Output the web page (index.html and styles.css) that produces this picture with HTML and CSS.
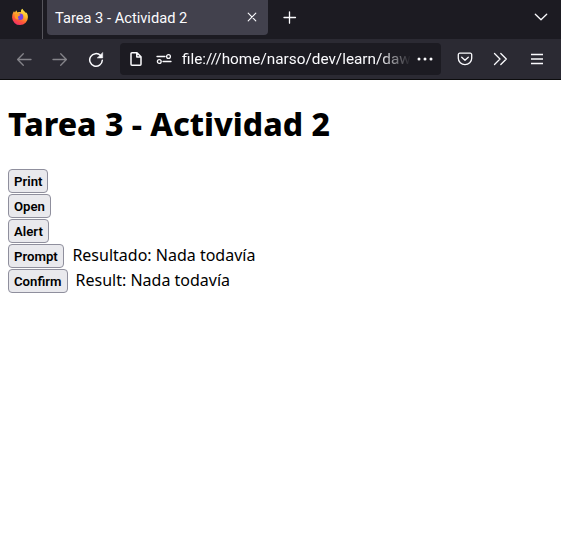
FILE: index.html
```html
<!DOCTYPE html>
<html lang="es">
<head>
<meta charset="utf-8">
<title>Tarea 3 - Actividad 2</title>
<link rel="stylesheet" href="styles.css">
</head>
<body>
<header class="tabs">
  <div class="pinned">
    <svg width="18" height="18" viewBox="0 0 18 18">
      <defs>
        <linearGradient id="flame" x1=".8" y1="0" x2=".3" y2="1"><stop offset="0" stop-color="#fff04a"/><stop offset=".4" stop-color="#ffb52a"/><stop offset=".7" stop-color="#ff5a36"/><stop offset="1" stop-color="#f02b6b"/></linearGradient>
      </defs>
      <path d="M1.300 7.200C1.600 5.500 2.200 4.300 3 3.300L4 4.600 5.200 2.200 6.500 4.600C8 3.900 9 4 10 4.200 9.600 2.500 10.400 1.200 11.500.7 12 2.700 14 3.200 15 5L15.500 4.400C16.600 6 17 7.600 16.900 9.300A7.900 7.700 0 0 1 1.100 9.500Z" fill="url(#flame)"/>
      <circle cx="9" cy="8.700" r="3.300" fill="#7542e5"/>
      <path d="M3.800 6.200C5.500 5.200 7.400 5.500 8.500 6.200L9.500 6.700C9 7.800 7.500 7.700 7.100 8.600 6.700 9.700 7.300 10.500 8 11 6 12.300 4.200 11 3.800 9Z" fill="#ff9a25"/>
    </svg>
  </div>
  <div class="tab"><span>Tarea 3 - Actividad 2</span>
    <svg class="close" width="10" height="10" viewBox="0 0 10 10"><path d="M1.200 1.200l7.600 7.600M8.800 1.200l-7.600 7.600"/></svg>
  </div>
  <svg class="plus" width="14" height="14" viewBox="0 0 14 14"><path d="M1 7.500h11.500M6.500 1.800v11.400"/></svg>
  <svg class="chevron" width="14" height="8" viewBox="0 0 14 8"><path d="M1.300 1.300L7 6.700l5.700-5.400"/></svg>
</header>
<nav class="toolbar">
  <svg class="back dim" width="16" height="16" viewBox="0 0 16 16"><path d="M15 8.500H2M7.300 2.800L1.600 8.500l5.700 5.700"/></svg>
  <svg class="forward dim" width="16" height="16" viewBox="0 0 16 16"><path d="M1 8.500h13M8.700 2.800l5.700 5.700-5.700 5.700"/></svg>
  <svg class="reload" width="16" height="16" viewBox="0 0 16 16"><path d="M12.600 4.600A6.300 6.300 0 1 0 14.300 9.200"/><path class="solid" d="M14.700 1.800v5.200H9.500z"/></svg>
  <div class="address">
    <svg class="page" width="14" height="16" viewBox="0 0 14 16"><path d="M3 1.700h5l4 4v7.600a1 1 0 0 1-1 1H3a1 1 0 0 1-1-1V2.700a1 1 0 0 1 1-1zM7.800 1.700v4.200H12"/></svg>
    <svg class="settings" width="16" height="12" viewBox="0 0 16 12"><path d="M1 3.500h8M7 8.500h8"/><circle cx="12.500" cy="3.500" r="1.900"/><circle cx="3.300" cy="8.500" r="1.900"/></svg>
    <div class="url">file:///home/narso/dev/learn/daw</div>
    <svg class="dots" width="16" height="4" viewBox="0 0 16 4"><circle cx="2" cy="2" r="1.500"/><circle cx="8" cy="2" r="1.500"/><circle cx="14" cy="2" r="1.500"/></svg>
  </div>
  <svg class="pocket" width="16" height="14" viewBox="0 0 16 14"><path d="M2.800 1.200h10.400a1.500 1.500 0 0 1 1.500 1.500v3.500a6.700 6.500 0 0 1-13.400 0V2.700a1.500 1.500 0 0 1 1.500-1.500zM4.700 5.200L8 8.300 11.300 5.200"/></svg>
  <svg class="more" width="15" height="14" viewBox="0 0 15 14"><path d="M1.500 1.500L7 7l-5.500 5.500M7.800 1.500L13.300 7l-5.500 5.500"/></svg>
  <svg class="menu" width="12" height="12" viewBox="0 0 12 12"><path d="M0 1.500h12M0 6h12M0 10.500h12"/></svg>
</nav>
<main>
  <h1>Tarea 3 - Actividad 2</h1>
  <div class="row"><button>Print</button></div>
  <div class="row"><button>Open</button></div>
  <div class="row"><button>Alert</button></div>
  <div class="row"><button>Prompt</button><span>Resultado: Nada todavía</span></div>
  <div class="row"><button>Confirm</button><span>Result: Nada todavía</span></div>
</main>
</body>
</html>
```
FILE: styles.css
```css
* { box-sizing: border-box; }
body { margin: 0; background: #fff; color: #000; font: 16px "Noto Sans", sans-serif; overflow: hidden; }
svg { display: block; flex: none; fill: none; stroke: #fbfbfe; stroke-width: 1.3; stroke-linecap: round; stroke-linejoin: round; }
.tabs { display: flex; height: 39px; background: #1c1b22; color: #fbfbfe; }
.pinned { width: 43px; border-right: 1px solid #56555c; padding: 8px 0 0 11px; }
.pinned svg { stroke: none; }
.tab { display: flex; align-items: center; justify-content: space-between; width: 221px; height: 35px; margin-left: 4px; padding: 0 11px 0 8px; border-radius: 0 0 4px 4px; background: #42414d; font: 14.67px Roboto, sans-serif; }
.close { stroke-width: 1.1; margin-top: -1px; }
.plus { margin: 10px 0 0 15px; }
.chevron { margin: 13px 13px 0 auto; }
.toolbar { display: flex; align-items: center; height: 41px; padding-bottom: 1px; background: #2b2a33; border-bottom: 1px solid #0c0c0d; }
.dim { stroke: #85848a; }
.back { margin-left: 16px; }
.forward { margin-left: 20px; }
.reload { margin-left: 20px; stroke-width: 1.5; margin-top: 1px; }
.solid { fill: #fbfbfe; stroke-width: .5; }
.address { display: flex; align-items: center; width: 321px; height: 32px; margin-left: 16px; padding: 0 8px 0 9px; border-radius: 4px; background: #1c1b22; }
.page { stroke-width: 1.5; }
.settings { margin-left: 13px; }
.url { width: 229px; margin: 0 6px 0 10px; overflow: hidden; white-space: nowrap; color: #fbfbfe; font: 15.33px/20px Roboto, sans-serif; mask-image: linear-gradient(to left, transparent, #000 32px); }
.dots { stroke: none; fill: #fbfbfe; }
.pocket { margin-left: 16px; }
.more { margin-left: 20px; }
.menu { margin-left: 23px; stroke-linecap: butt; }
main { padding: 0 8px; }
h1 { margin: 0; padding: 22px 0; font-size: 32px; line-height: 44px; font-weight: 800; }
.row { display: flex; height: 25px; }
.row span { margin-left: 8px; line-height: 24px; }
.row:nth-child(5) span { margin-left: 8.6px; }
button { height: 24px; margin-top: 1px; padding: 1px 5px; border: 1px solid #8f8f9d; border-radius: 4px; background: #e9e9ed; color: #000; font: 600 13.2px Roboto, sans-serif; }
```
